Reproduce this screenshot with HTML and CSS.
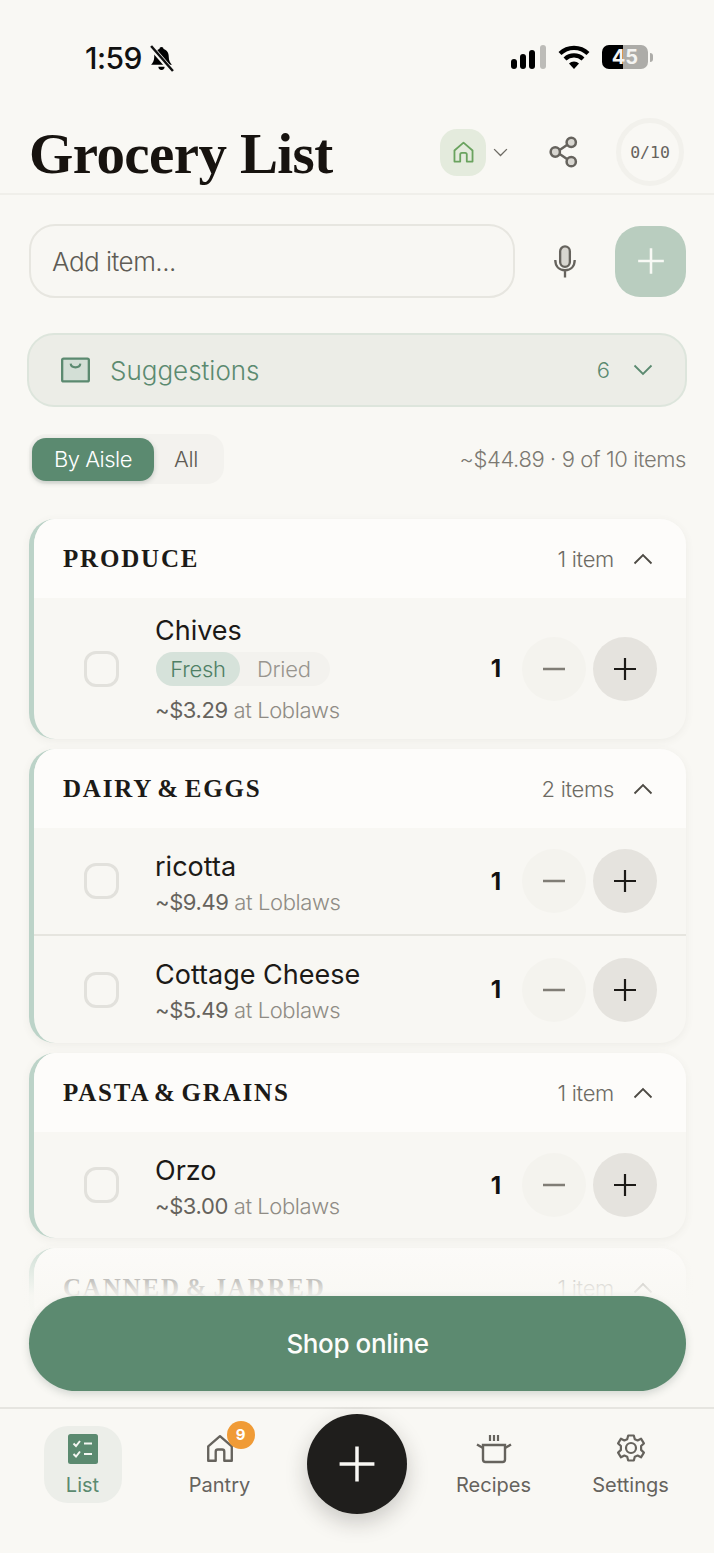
FILE: index.html
```html
<!DOCTYPE html>
<html lang="en">
<head>
  <meta charset="UTF-8" />
  <meta name="viewport" content="width=device-width, initial-scale=1" />
  <title>Grocery List</title>
  <link rel="stylesheet" href="styles.css">
</head>
<body>
  <svg class="sprite" aria-hidden="true">
    <symbol id="chev-down" viewBox="0 0 20 12"><path d="M1.5 1.5 10 10l8.500-8.500" fill="none" stroke="currentColor" stroke-width="1.800"/></symbol>
    <symbol id="chev-up" viewBox="0 0 20 12"><path d="M1.500 10.500 10 2l8.500 8.500" fill="none" stroke="currentColor" stroke-width="1.800"/></symbol>
    <symbol id="plus" viewBox="0 0 24 24"><path d="M12 1v22M1 12h22" fill="none" stroke="currentColor" stroke-width="2.200"/></symbol>
    <symbol id="minus" viewBox="0 0 24 24"><path d="M1 12h22" fill="none" stroke="currentColor" stroke-width="2.400"/></symbol>
    <symbol id="house" viewBox="0 0 28 28"><path d="M3 25V11.500L14 2l11 9.500V25h-7v-8.500a2 2 0 0 0-2-2h-4a2 2 0 0 0-2 2V25Z" fill="none" stroke="currentColor" stroke-width="2.200" stroke-linejoin="round"/></symbol>
  </svg>

  <div class="screen">
    <!-- status bar -->
    <div class="status">
      <div class="status-left">
        <span class="clock">1:59</span>
        <svg class="bell" viewBox="0 0 24 26"><path d="M12 2c1.200 0 2 .8 2 1.800 3.500 1 5 4 5 7.700 0 3.500 1.300 5.500 3 7.500H2c1.700-2 3-4 3-7.500 0-3.700 1.500-6.700 5-7.700C10 2.800 10.800 2 12 2Z"/><path d="M9 21h6a3 3 0 0 1-6 0Z"/><path d="M2 2l20 23" stroke="#f9f8f4" stroke-width="5"/><path d="M2 1l21 24" stroke="#111" stroke-width="2.400"/></svg>
      </div>
      <div class="status-right">
        <svg class="signal" viewBox="0 0 35 24"><rect x="0" y="14" width="6" height="10" rx="3"/><rect x="9" y="9" width="6" height="15" rx="3"/><rect x="18" y="5" width="6" height="19" rx="3"/><rect x="29" y="0" width="6" height="24" rx="3" fill="#bdbcb8"/></svg>
        <svg class="wifi" viewBox="0 0 32 24"><path d="M2 8.500a20 20 0 0 1 28 0M7 14a13 13 0 0 1 18 0" fill="none" stroke="#000" stroke-width="4.200"/><path d="M16 24l-5-5.500a7 7 0 0 1 10 0Z"/></svg>
        <div class="battery"><div class="battery-body"><span>45</span></div><i></i></div>
      </div>
    </div>

    <!-- header -->
    <header class="top">
      <h1>Grocery List</h1>
      <div class="top-actions">
        <div class="home-switch">
          <span class="home-pill"><svg class="home-icon"><use href="#house"/></svg></span>
          <svg class="chev-sm"><use href="#chev-down"/></svg>
        </div>
        <svg class="share" viewBox="0 0 30 32"><path d="M8 16 22 6.500M8 16l14 9.500" stroke="#66635d" stroke-width="2.600" fill="none"/><circle cx="6.500" cy="16" r="4.800" fill="#d8d6d0" stroke="#66635d" stroke-width="2.600"/><circle cx="23" cy="6" r="4.800" fill="#d8d6d0" stroke="#66635d" stroke-width="2.600"/><circle cx="23" cy="26" r="4.800" fill="#d8d6d0" stroke="#66635d" stroke-width="2.600"/></svg>
        <div class="progress">0/10</div>
      </div>
    </header>

    <main class="content">
      <div class="add-row">
        <div class="add-input">Add item...</div>
        <svg class="mic" viewBox="0 0 24 34"><rect x="7" y="1.500" width="10" height="21" rx="5" fill="#d8d6d0" stroke="#66635d" stroke-width="2.400"/><path d="M2 15.500c0 6.500 4 10.500 10 10.500s10-4 10-10.500M12 26v7.500" fill="none" stroke="#66635d" stroke-width="2.400"/></svg>
        <div class="add-btn"><svg class="add-plus"><use href="#plus"/></svg></div>
      </div>

      <div class="suggestions">
        <svg class="bag" viewBox="0 0 30 26"><rect x="1.200" y="1.200" width="27.600" height="23.600" rx="1.500" fill="#d3dfd6" stroke="#5b8a70" stroke-width="2.400"/><path d="M10 6.500c.5 5 9.500 5 10 0" fill="none" stroke="#5b8a70" stroke-width="2.200"/></svg>
        <span class="sugg-label">Suggestions</span>
        <span class="sugg-count">6</span>
        <svg class="chev"><use href="#chev-down"/></svg>
      </div>

      <div class="filter-row">
        <div class="segment">
          <span class="seg-item active">By Aisle</span>
          <span class="seg-item">All</span>
        </div>
        <div class="totals">~$44.89 · 9 of 10 items</div>
      </div>

      <section class="aisle">
        <div class="aisle-head">
          <h2>PRODUCE</h2>
          <span class="aisle-count">1 item</span>
          <svg class="chev"><use href="#chev-up"/></svg>
        </div>
        <div class="item item-tall">
          <span class="check"></span>
          <div class="item-info">
            <div class="item-name">Chives</div>
            <div class="variants"><span class="variant on">Fresh</span><span class="variant">Dried</span></div>
            <div class="item-price"><b>~$3.29</b> at Loblaws</div>
          </div>
          <span class="qty">1</span>
          <span class="round dec"><svg><use href="#minus"/></svg></span>
          <span class="round inc"><svg><use href="#plus"/></svg></span>
        </div>
      </section>

      <section class="aisle">
        <div class="aisle-head">
          <h2>DAIRY &amp; EGGS</h2>
          <span class="aisle-count">2 items</span>
          <svg class="chev"><use href="#chev-up"/></svg>
        </div>
        <div class="item">
          <span class="check"></span>
          <div class="item-info">
            <div class="item-name">ricotta</div>
            <div class="item-price"><b>~$9.49</b> at Loblaws</div>
          </div>
          <span class="qty">1</span>
          <span class="round dec"><svg><use href="#minus"/></svg></span>
          <span class="round inc"><svg><use href="#plus"/></svg></span>
        </div>
        <div class="item">
          <span class="check"></span>
          <div class="item-info">
            <div class="item-name">Cottage Cheese</div>
            <div class="item-price"><b>~$5.49</b> at Loblaws</div>
          </div>
          <span class="qty">1</span>
          <span class="round dec"><svg><use href="#minus"/></svg></span>
          <span class="round inc"><svg><use href="#plus"/></svg></span>
        </div>
      </section>

      <section class="aisle">
        <div class="aisle-head">
          <h2>PASTA &amp; GRAINS</h2>
          <span class="aisle-count">1 item</span>
          <svg class="chev"><use href="#chev-up"/></svg>
        </div>
        <div class="item">
          <span class="check"></span>
          <div class="item-info">
            <div class="item-name">Orzo</div>
            <div class="item-price"><b>~$3.00</b> at Loblaws</div>
          </div>
          <span class="qty">1</span>
          <span class="round dec"><svg><use href="#minus"/></svg></span>
          <span class="round inc"><svg><use href="#plus"/></svg></span>
        </div>
      </section>

      <section class="aisle">
        <div class="aisle-head">
          <h2>CANNED &amp; JARRED</h2>
          <span class="aisle-count">1 item</span>
          <svg class="chev"><use href="#chev-up"/></svg>
        </div>
      </section>

      <!-- floats over the list -->
      <div class="shop-wrap">
        <div class="shop-btn">Shop online</div>
      </div>
    </main>

    <nav class="tabs">
      <div class="tab active">
        <svg class="tab-icon" viewBox="0 0 30 30"><rect width="30" height="30" rx="2.500" fill="#5b8a70"/><path d="M5.500 9.500l2.500 2.500 4-5M5.500 20l2.500 2.500 4-5" fill="none" stroke="#f4f6f2" stroke-width="2"/><path d="M16 9.500h8M16 20h8" stroke="#f4f6f2" stroke-width="2.200"/></svg>
        <span>List</span>
      </div>
      <div class="tab">
        <span class="tab-house">
          <svg class="tab-icon"><use href="#house"/></svg>
          <b class="badge">9</b>
        </span>
        <span>Pantry</span>
      </div>
      <div class="tab-center">
        <div class="fab"><svg><use href="#plus"/></svg></div>
      </div>
      <div class="tab">
        <svg class="tab-icon pot" viewBox="0 0 36 30"><path d="M14 1v6M18 1v6M22 1v6" stroke="#66635d" stroke-width="2.200"/><path d="M7 11h22v14.500a2.500 2.500 0 0 1-2.500 2.500h-17A2.500 2.500 0 0 1 7 25.500Z" fill="none" stroke="#66635d" stroke-width="2.400"/><path d="M1 10.500 7 14M35 10.500 29 14" stroke="#66635d" stroke-width="2.400"/></svg>
        <span>Recipes</span>
      </div>
      <div class="tab">
        <svg class="tab-icon" viewBox="0 0 30 30"><path d="M12.200 1.500h5.600l1 3.700 2.800 1.200 3.400-1.700 2.900 4.700-2.800 2.600v3.900l2.800 2.700-2.900 4.700-3.400-1.700-2.800 1.100-1 3.800h-5.600l-1-3.800-2.800-1.100-3.400 1.700-2.900-4.700 2.800-2.700V12l-2.800-2.600 2.900-4.700 3.400 1.700 2.800-1.200Z" fill="none" stroke="#66635d" stroke-width="2.200" stroke-linejoin="round"/><circle cx="15" cy="14" r="5" fill="none" stroke="#66635d" stroke-width="2.200"/></svg>
        <span>Settings</span>
      </div>
    </nav>
  </div>
</body>
</html>
```

FILE: styles.css
```css
* {
  box-sizing: border-box;
}
body {
  margin: 0;
  font-family: 'Inter', 'Noto Sans', sans-serif;
  background: #f9f8f4;
  color: #1c1a17;
}
.sprite {
  display: none;
}
.screen {
  width: 714px;
  height: 1553px;
  display: flex;
  flex-direction: column;
  overflow: hidden;
  background: #f9f8f4;
}

/* status bar */
.status {
  height: 100px;
  flex-shrink: 0;
  display: flex;
  justify-content: space-between;
  align-items: flex-start;
  padding: 41px 61px 0 85px;
}
.status-left {
  display: flex;
  align-items: center;
  gap: 7px;
}
.clock {
  font-size: 30px;
  line-height: 34px;
  font-weight: 500;
  letter-spacing: -0.5px;
  color: #111;
}
.bell {
  width: 25px;
  height: 27px;
}
.status-right {
  display: flex;
  align-items: center;
  gap: 12px;
  padding-top: 4px;
}
.signal {
  width: 35px;
  height: 24px;
}
.wifi {
  width: 32px;
  height: 24px;
}
.battery {
  display: flex;
  align-items: center;
  gap: 2px;
}
.battery-body {
  width: 46px;
  height: 24px;
  border-radius: 7px;
  background: linear-gradient(90deg, #000 0 46%, #adaca8 46%);
  color: #f4f4f2;
  font-size: 20px;
  font-weight: 700;
  line-height: 24px;
  text-align: center;
}
.battery i {
  width: 3px;
  height: 9px;
  border-radius: 0 3px 3px 0;
  background: #adaca8;
}

/* header */
.top {
  height: 95px;
  flex-shrink: 0;
  display: flex;
  justify-content: space-between;
  align-items: flex-end;
  padding: 0 30px 7px 29px;
  border-bottom: 2px solid #f0efea;
}
.top h1 {
  margin: 0;
  font-family: 'Liberation Serif', serif;
  font-size: 57px;
  line-height: 64px;
  font-weight: 700;
  letter-spacing: -0.6px;
  color: #17130f;
}
.top-actions {
  display: flex;
  align-items: center;
}
.home-switch {
  display: flex;
  align-items: center;
  gap: 7px;
}
.home-pill {
  width: 46px;
  height: 47px;
  border-radius: 17px;
  background: #e4ebdd;
  display: flex;
  align-items: center;
  justify-content: center;
}
.home-icon {
  width: 23px;
  height: 23px;
  color: #6aa35f;
}
.chev-sm {
  width: 15px;
  height: 9px;
  color: #6e6b64;
}
.share {
  width: 29px;
  height: 32px;
  margin-left: 41px;
}
.progress {
  width: 68px;
  height: 68px;
  margin-left: 38px;
  border: 5px solid #f2f1ec;
  border-radius: 50%;
  display: flex;
  align-items: center;
  justify-content: center;
  font-family: 'DejaVu Sans Mono', monospace;
  font-size: 16.500px;
  color: #66635d;
}

/* list area */
.content {
  position: relative;
  flex: 1;
  min-height: 0;
  overflow: hidden;
  padding: 29px 28px 0 29px;
}
.add-row {
  display: flex;
  align-items: center;
  height: 74px;
}
.add-input {
  width: 486px;
  height: 74px;
  border: 2px solid #e7e6e0;
  border-radius: 26px;
  background: #f8f7f3;
  padding: 0 21px;
  display: flex;
  align-items: center;
  font-size: 26px;
  font-weight: 300;
  letter-spacing: -0.5px;
  color: #5f5c55;
}
.mic {
  width: 24px;
  height: 33px;
  margin-left: 38px;
}
.add-btn {
  width: 71px;
  height: 71px;
  margin-left: 38px;
  border-radius: 25px;
  background: #b9cdbf;
  display: flex;
  align-items: center;
  justify-content: center;
}
.add-plus {
  width: 28px;
  height: 28px;
  color: #f8f9f5;
}
.suggestions {
  height: 74px;
  margin: 35px -1px 0 -2px;
  border: 2px solid #dde5dc;
  border-radius: 27px;
  background: #ecede7;
  padding: 0 32px;
  display: flex;
  align-items: center;
  color: #5b8a70;
}
.bag {
  width: 29px;
  height: 26px;
}
.sugg-label {
  margin-left: 20px;
  flex: 1;
  font-size: 26px;
  font-weight: 300;
}
.sugg-count {
  font-size: 22px;
  font-weight: 300;
  margin-right: 23px;
}
.chev {
  width: 20px;
  height: 12px;
  flex-shrink: 0;
}
.filter-row {
  display: flex;
  justify-content: space-between;
  align-items: center;
  margin-top: 27px;
  height: 50px;
}
.segment {
  width: 195px;
  height: 50px;
  padding: 3px;
  border-radius: 17px;
  background: #f3f2ee;
  display: flex;
  align-items: center;
}
.seg-item {
  flex-shrink: 0;
  font-size: 22px;
  font-weight: 300;
  color: #5f5c55;
  letter-spacing: -0.3px;
}
.seg-item.active {
  width: 122px;
  height: 43px;
  margin-right: 20px;
  border-radius: 14px;
  background: #5b8a70;
  color: #fff;
  letter-spacing: -0.5px;
  display: flex;
  align-items: center;
  justify-content: center;
  box-shadow: 0 2px 5px rgba(60, 80, 70, 0.25);
}
.totals {
  font-size: 22px;
  font-weight: 300;
  letter-spacing: -0.4px;
  color: #7c7972;
}

/* aisle cards */
.aisle {
  margin-top: 10px;
  border-left: 5px solid #bcd3c8;
  border-radius: 26px;
  background: #f8f7f3;
  overflow: hidden;
  box-shadow: 0 2px 8px rgba(90, 85, 70, 0.07);
}
.filter-row + .aisle {
  margin-top: 35px;
}
.aisle-head {
  height: 79px;
  padding: 0 33px 0 29px;
  background: #fdfcfa;
  display: flex;
  align-items: center;
}
.aisle-head h2 {
  margin: 0;
  flex: 1;
  font-family: 'Liberation Serif', serif;
  font-size: 25px;
  font-weight: 700;
  letter-spacing: 1.800px;
  word-spacing: -3px;
  color: #1c1a17;
}
.aisle-count {
  margin-right: 19px;
  font-size: 22px;
  font-weight: 300;
  letter-spacing: -0.3px;
  color: #6e6b64;
}
.aisle-head .chev {
  color: #4d4a44;
}
.item {
  height: 106px;
  padding: 0 29px 0 50px;
  display: flex;
  align-items: center;
}
.item + .item {
  height: 109px;
  border-top: 2px solid #e6e5df;
}
.item-tall {
  height: 141px;
}
.check {
  width: 35px;
  height: 36px;
  flex-shrink: 0;
  border: 3px solid #e2e1dc;
  border-radius: 12px;
}
.item-info {
  flex: 1;
  margin-left: 36px;
  padding-top: 4px;
}
.item-tall .item-info {
  padding-top: 2px;
}
.item-name {
  font-size: 27px;
  line-height: 34px;
  color: #1c1a17;
}
.item-price {
  margin-top: 3px;
  font-size: 22px;
  line-height: 30px;
  font-weight: 300;
  letter-spacing: -0.4px;
  color: #8f8c85;
}
.item-price b {
  font-weight: 400;
  color: #66635d;
}
.variants {
  width: 174px;
  height: 34px;
  margin: 4px 0 9px 1px;
  border-radius: 17px;
  background: #f3f2ee;
  display: flex;
  align-items: center;
  font-size: 22px;
  font-weight: 300;
  color: #98958e;
}
.variant {
  height: 34px;
  padding: 0 18px 0 17px;
  display: flex;
  align-items: center;
  letter-spacing: -0.3px;
}
.variant.on {
  width: 84px;
  justify-content: center;
  padding: 0;
  border-radius: 17px;
  background: #d6e2da;
  color: #4f7f65;
}
.qty {
  width: 14px;
  margin-right: 19px;
  font-size: 24px;
  font-weight: 700;
  text-align: center;
  color: #111;
}
.round {
  width: 64px;
  height: 64px;
  flex-shrink: 0;
  border-radius: 50%;
  display: flex;
  align-items: center;
  justify-content: center;
}
.round svg {
  width: 24px;
  height: 24px;
}
.dec {
  background: #f4f3ee;
  color: #807d76;
}
.inc {
  margin-left: 7px;
  background: #e5e3de;
  color: #1c1a17;
}

/* shop button with fade */
.shop-wrap {
  position: absolute;
  left: 0;
  right: 0;
  bottom: 0;
  height: 161px;
  padding: 50px 28px 0 29px;
  background: linear-gradient(180deg, rgba(249, 248, 244, 0.3) 0, rgba(249, 248, 244, 0.97) 50px);
}
.shop-btn {
  height: 95px;
  border-radius: 48px;
  background: #5c8a70;
  color: #fdfdfb;
  font-size: 26px;
  font-weight: 500;
  letter-spacing: -0.4px;
  display: flex;
  align-items: center;
  justify-content: center;
  box-shadow: 0 3px 8px rgba(60, 80, 70, 0.2);
}

/* bottom tabs */
.tabs {
  height: 146px;
  flex-shrink: 0;
  border-top: 2px solid #e6e5e0;
  padding: 17px 15px 0 14px;
  display: grid;
  grid-template-columns: repeat(5, 137px);
  align-items: start;
}
.tab {
  width: 78px;
  height: 77px;
  margin: 0 auto;
  border-radius: 24px;
  padding-top: 8px;
  display: flex;
  flex-direction: column;
  align-items: center;
  font-size: 20px;
  line-height: 26px;
  color: #66635d;
}
.tab span:last-child {
  margin-top: 8px;
  white-space: nowrap;
}
.tab.active {
  background: #eceee9;
  color: #5b8a70;
}
.tab-icon {
  display: block;
  width: 30px;
  height: 30px;
}
.tab-icon.pot {
  width: 36px;
}
.tab-house {
  position: relative;
  display: block;
  color: #66635d;
}
.badge {
  position: absolute;
  top: -13px;
  left: 22px;
  width: 28px;
  height: 28px;
  border-radius: 50%;
  background: #f09b36;
  color: #fff;
  font-size: 15px;
  line-height: 28px;
  text-align: center;
}
.tab-center {
  display: flex;
  justify-content: center;
}
.fab {
  width: 100px;
  height: 100px;
  margin-top: -12px;
  border-radius: 50%;
  background: #1f1e1c;
  color: #f9f8f4;
  display: flex;
  align-items: center;
  justify-content: center;
  box-shadow: 0 8px 22px rgba(30, 28, 25, 0.22);
}
.fab svg {
  width: 38px;
  height: 38px;
}
```
